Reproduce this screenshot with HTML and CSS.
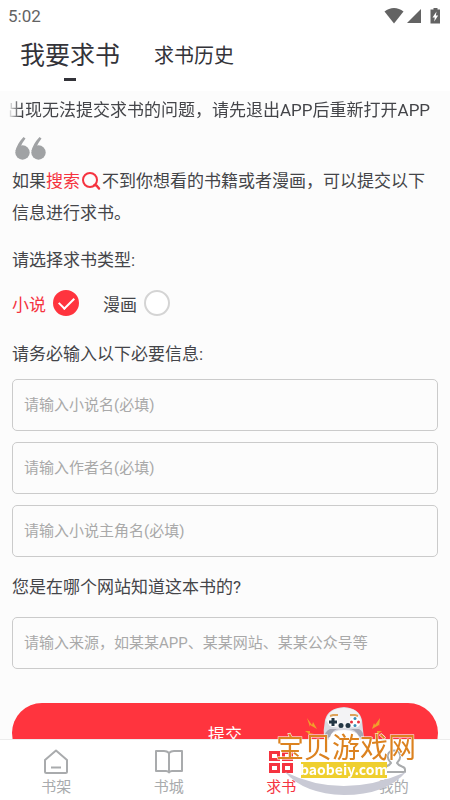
FILE: index.html
```html
<!DOCTYPE html>
<html lang="zh-CN">
<head>
<meta charset="utf-8">
<meta name="viewport" content="width=device-width, initial-scale=1">
<title>我要求书</title>
<link rel="stylesheet" href="styles.css">
</head>
<body>
<div class="app">
  <header class="top">
    <div class="status">
      <span>5:02</span>
      <svg class="status-icons" width="58" height="18" viewBox="0 0 58 18" aria-hidden="true">
        <path d="M0.500 4.500C6-0.300 14-0.300 19.500 4.500L10 16.500Z" fill="#636363"/>
        <path d="M37 2V16H23Z" fill="#636363"/>
        <path d="M49.500 1h4v1.500h2.500v14h-9.500V2.500h3Z" fill="#636363"/>
        <path d="M52.500 4.500l-4 6h2.300l-.600 4 4-6h-2.300Z" fill="#fff"/>
      </svg>
    </div>
    <nav class="tabs">
      <a class="tab tab-active" href="#request">我要求书</a>
      <a class="tab" href="#history">求书历史</a>
    </nav>
  </header>

  <main class="content" id="request">
    <p class="notice">出现无法提交求书的问题，请先退出APP后重新打开APP</p>
    <form class="form">
      <svg class="quote" width="31" height="23" viewBox="0 0 31 23" aria-hidden="true">
        <g fill="#a0a2a4">
          <circle cx="7.500" cy="15.500" r="7.200"/>
          <path d="M.500 14Q2 7 8.500 0L10.500 1.500Q7 6 5.500 10Z"/>
          <circle cx="23.500" cy="15.500" r="7.200"/>
          <path d="M16.500 14Q18 7 24.500 0L26.500 1.500Q23 6 21.500 10Z"/>
        </g>
      </svg>
      <p class="intro">如果<a class="search" href="#search">搜索<svg class="search-icon" width="20" height="20" viewBox="0 0 20 20" aria-hidden="true"><circle cx="9" cy="9" r="7" fill="none" stroke="#f5333f" stroke-width="2"/><path d="M13.500 14l2 .500 2.500 3" fill="none" stroke="#f5333f" stroke-width="2.500" stroke-linecap="round"/></svg></a>不到你想看的书籍或者漫画，可以提交以下信息进行求书。</p>

      <fieldset class="kinds">
        <legend class="heading">请选择求书类型:</legend>
        <div class="choices">
          <label class="choice"><span>小说</span><input type="radio" name="kind" checked></label>
          <label class="choice"><span>漫画</span><input type="radio" name="kind"></label>
        </div>
      </fieldset>

      <h2 class="heading">请务必输入以下必要信息:</h2>
      <div class="fields">
        <input class="field" type="text" aria-label="小说名" placeholder="请输入小说名(必填)">
        <input class="field" type="text" aria-label="作者名" placeholder="请输入作者名(必填)">
        <input class="field" type="text" aria-label="小说主角名" placeholder="请输入小说主角名(必填)">
      </div>

      <label class="heading" for="source">您是在哪个网站知道这本书的?</label>
      <div class="fields fields-source">
        <input class="field" id="source" type="text" placeholder="请输入来源，如某某APP、某某网站、某某公众号等">
      </div>
      <button class="submit" type="button">提交</button>
    </form>
  </main>

  <nav class="bottom">
    <a class="item" href="#shelf">
      <svg width="28" height="26" viewBox="0 0 28 26" fill="none" stroke="#a9abad" stroke-width="2" stroke-linejoin="round" aria-hidden="true"><path d="M14 1.500L25 11v11.500q0 1.500-1.500 1.500h-19Q3 24 3 22.500V11Z"/><path d="M9 18.500h10"/></svg>
      <span>书架</span>
    </a>
    <a class="item" href="#store">
      <svg width="28" height="26" viewBox="0 0 28 26" fill="none" stroke="#a9abad" stroke-width="2" stroke-linejoin="round" aria-hidden="true"><path d="M14 4Q12 2 9 2H1v20h10q2 0 3 1.500Q15 22 17 22h10V2h-8q-3 0-5 2Z"/><path d="M14 4v19"/></svg>
      <span>书城</span>
    </a>
    <a class="item item-active" href="#request">
      <svg width="28" height="26" viewBox="0 0 28 26" fill="none" stroke="#f5333f" stroke-width="3" aria-hidden="true"><path d="M3.500 3.500h8v7h-8ZM16.500 3.500h8v7h-8ZM3.500 15.500h8v7h-8ZM16.500 15.500h8v7h-8Z"/></svg>
      <span>求书</span>
    </a>
    <a class="item" href="#me">
      <svg width="28" height="26" viewBox="0 0 28 26" fill="none" stroke="#a9abad" stroke-width="2" stroke-linejoin="round" aria-hidden="true"><path d="M11 14C5 8 8 1.500 14 1.500S23 8 17 14q1 2 5 3.500 3 1 3 3V23H3v-2.500q0-2 3-3Q10 16 11 14Z"/></svg>
      <span>我的</span>
    </a>
  </nav>

  <svg class="mark" width="160" height="100" viewBox="0 0 160 100" role="img" aria-label="宝贝游戏网 baobeiy.com">
    <path d="M20 72Q77 100 141 72Q121 95 79 95Q39 94 20 72Z" fill="#c9cad5"/>
    <g fill="#f0a02c">
      <path d="M42 18l5 7 1-3 4 7-7-4v2Z"/>
      <path d="M115 18l-5 7-1-2-2 6 7-4v2Z"/>
      <path d="M40 31l5 0 0 2 4 1-6 0v-1ZM117 31l-5 0 0 2-4 1 6 0v-1Z"/>
    </g>
    <path d="M60 20Q63 8 79 7Q94 8 97 20Q98 30 99 39H59Q58 30 60 20Z" fill="#d9dbe3"/>
    <path d="M61 20Q64 8 79 8Q94 8 96 20Q94 28 79 28T61 20Z" fill="#f3f3f5"/>
    <ellipse cx="79" cy="38" rx="15" ry="8" fill="#fff"/>
    <path d="M60 39Q59 31 65 29H94Q99 31 98 39L94 36Q90 29 84 29H74Q68 29 65 37Z" fill="#a6a7b3"/>
    <path d="M65 16l3-1h5M93 16l-3-1h-5" fill="none" stroke="#dda35a" stroke-width="2"/>
    <circle cx="68" cy="22" r="5" fill="#fff"/>
    <path d="M66.500 18h3v2.500H72v3h-2.500V26h-3v-2.500H64v-3h2.500Z" fill="#243745"/>
    <circle cx="90" cy="22" r="5.500" fill="#fff"/>
    <circle cx="90" cy="18.500" r="1.500" fill="#388bb4"/>
    <circle cx="86.500" cy="22" r="1.500" fill="#e7333c"/>
    <circle cx="93.500" cy="22" r="1.500" fill="#e7333c"/>
    <circle cx="90" cy="25.500" r="1.500" fill="#388bb4"/>
    <circle cx="76" cy="25.500" r="2.500" fill="#243745"/>
    <circle cx="83" cy="25.500" r="2.500" fill="#243745"/>
    <text class="mark-name" x="11" y="58">宝贝游戏网</text>
    <rect x="36" y="62" width="86" height="16" fill="#efcf2e"/>
    <text class="mark-site" x="79" y="75" text-anchor="middle">baobeiy.com</text>
  </svg>
</div>
</body>
</html>
```
FILE: styles.css
```css
* {
  box-sizing: border-box;
}

body {
  margin: 0;
  font-family: Roboto, "Noto Sans CJK SC", sans-serif;
  font-size: 17px;
  color: #444549;
  background: #fff;
}

a {
  color: inherit;
  text-decoration: none;
}

.app {
  position: relative;
  display: flex;
  flex-direction: column;
  height: 100vh;
  overflow: hidden;
}

.status {
  display: flex;
  align-items: center;
  justify-content: space-between;
  height: 32px;
  padding: 0 8px;
  color: #636363;
}

.tabs {
  display: flex;
  gap: 34px;
  height: 59px;
  padding: 0 20px;
}

.tab {
  display: flex;
  flex-direction: column;
  align-items: center;
  padding-top: 2px;
  font-size: 20px;
  line-height: 44px;
  color: #333339;
}

.tab-active {
  font-size: 25px;
}

.tab-active::after {
  content: "";
  width: 12px;
  height: 3px;
  background: #333339;
}

.content {
  flex: 1;
  min-height: 0;
  overflow-y: auto;
  scrollbar-width: none;
  background: #fcfcfc;
}

.notice {
  margin: 0 8px;
  line-height: 38px;
  white-space: nowrap;
  overflow: hidden;
  -webkit-mask-image: linear-gradient(90deg, transparent, #000 12px, #000 calc(100% - 12px), transparent);
  mask-image: linear-gradient(90deg, transparent, #000 12px, #000 calc(100% - 12px), transparent);
}

.form {
  padding: 8px 12px 24px;
}

.quote {
  display: block;
  margin-left: 3px;
}

.intro {
  margin: 5px 0 15px;
  line-height: 32px;
}

.search {
  color: #f5333f;
}

.search-icon {
  margin: 0 1px;
  vertical-align: -4px;
}

.kinds {
  margin: 0;
  padding: 0;
  border: 0;
}

.heading {
  display: block;
  margin: 0;
  padding: 0;
  font-size: 17px;
  font-weight: 400;
  line-height: 32px;
}

.choices {
  display: flex;
  gap: 24px;
  padding: 14px 0 22px;
}

.choice {
  display: flex;
  align-items: center;
  gap: 7px;
}

.choice:has(:checked) {
  color: #f5333f;
}

.choice input {
  display: grid;
  place-items: center;
  appearance: none;
  width: 26px;
  height: 26px;
  margin: 0;
  border: 2px solid #d4d4d4;
  border-radius: 50%;
  background: #fff;
}

.choice input:checked {
  border-color: #ff343e;
  background: #ff343e;
}

.choice input:checked::after {
  content: "";
  width: 13px;
  height: 7px;
  margin-bottom: 4px;
  border: solid #fff;
  border-width: 0 0 2px 2px;
  transform: rotate(-45deg);
}

.fields {
  display: grid;
  gap: 11px;
  padding: 9px 0 14px;
}

.fields-source {
  padding-top: 14px;
}

.field {
  width: 100%;
  height: 52px;
  padding: 0 11px;
  border: 1px solid #cbcbcb;
  border-radius: 5px;
  background: #fcfcfc;
  font-family: inherit;
  font-size: 15px;
  color: #444549;
}

.field::placeholder {
  color: #a9a9a9;
  opacity: 1;
}

.submit {
  display: block;
  width: 100%;
  height: 60px;
  margin-top: 20px;
  border: 0;
  border-radius: 30px;
  background: #ff343e;
  font-family: inherit;
  font-size: 17px;
  color: #fff;
}

.bottom {
  display: flex;
  height: 61px;
  border-top: 1px solid #ececec;
  background: #fff;
}

.item {
  display: flex;
  flex: 1;
  flex-direction: column;
  align-items: center;
  padding-top: 9px;
  font-size: 15px;
  line-height: 24px;
  color: #a9abad;
}

.item-active {
  color: #f5333f;
}

.mark {
  position: absolute;
  right: 25px;
  bottom: 0;
  pointer-events: none;
}

.mark-name {
  font-family: "Noto Sans CJK SC", sans-serif;
  font-size: 28px;
  fill: #dc821f;
  stroke: #fff;
  stroke-width: 1px;
  paint-order: stroke;
}

.mark-site {
  font-family: "Noto Sans CJK SC", sans-serif;
  font-size: 14px;
  font-weight: 700;
  fill: #fff;
}
```
